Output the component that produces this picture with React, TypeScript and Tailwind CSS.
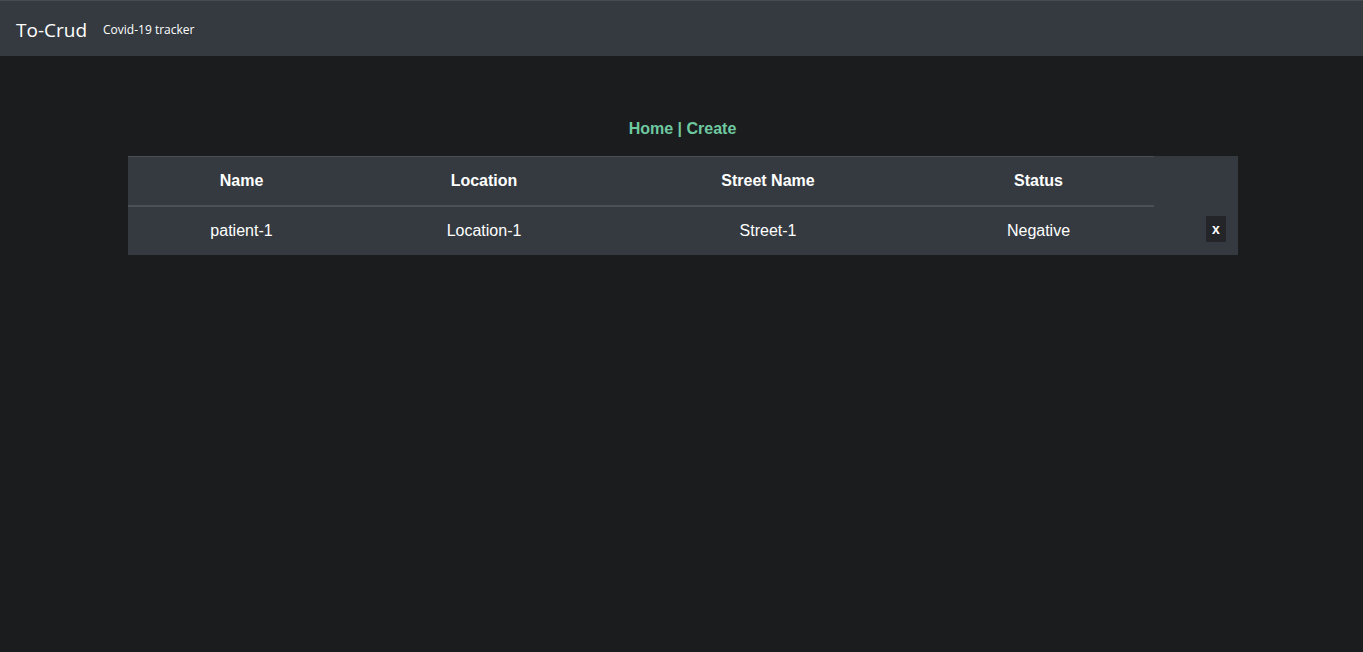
import React from "react";

const patients = [
  { name: "patient-1", location: "Location-1", street: "Street-1", status: "Negative" },
];

const Navbar = () => (
  <nav className="h-14 bg-[#343a40] border-t border-[#454b52] flex items-center px-4 pt-[3px]" style={{ fontFamily: '"Open Sans", "Noto Sans", sans-serif' }}>
    <span className="text-[19px] text-white mr-4 leading-none">To-Crud</span>
    <span className="text-[12px] text-white leading-none">Covid-19 tracker</span>
  </nav>
);

export default function App() {
  return (
    <div className="min-h-[652px] bg-[#1b1c1e]">
      <Navbar />
      <main className="pt-[64px]" style={{ fontFamily: '"Liberation Sans", Arial, sans-serif' }}>
        <div className="text-center font-bold text-[16px] leading-[18px] text-[#6fc9a0] mb-[18px] pl-[2px]">
          <span>Home</span> | <span>Create</span>
        </div>
        <div className="ml-[128px] w-[1110px] bg-[#343a40] text-white text-[16px]">
          <div className="grid grid-cols-[227px_258px_310px_231px_84px] font-bold text-center">
            <div className="border-t border-b-2 border-[#4b5058] py-3 leading-6">Name</div>
            <div className="border-t border-b-2 border-[#4b5058] py-3 leading-6">Location</div>
            <div className="border-t border-b-2 border-[#4b5058] py-3 leading-6">Street Name</div>
            <div className="border-t border-b-2 border-[#4b5058] py-3 leading-6">Status</div>
            <div className="bg-[#343a40]"></div>
          </div>
          {patients.map((p) => (
            <div key={p.name} className="grid grid-cols-[227px_258px_310px_231px_84px] text-center items-center h-12">
              <div className="leading-6">{p.name}</div>
              <div className="leading-6">{p.location}</div>
              <div className="leading-6">{p.street}</div>
              <div className="leading-6">{p.status}</div>
              <div className="flex justify-end pr-3 pb-1">
                <button className="w-5 h-[26px] bg-[#232528] text-white text-[14px] font-bold leading-none flex items-center justify-center">x</button>
              </div>
            </div>
          ))}
        </div>
      </main>
    </div>
  );
}
